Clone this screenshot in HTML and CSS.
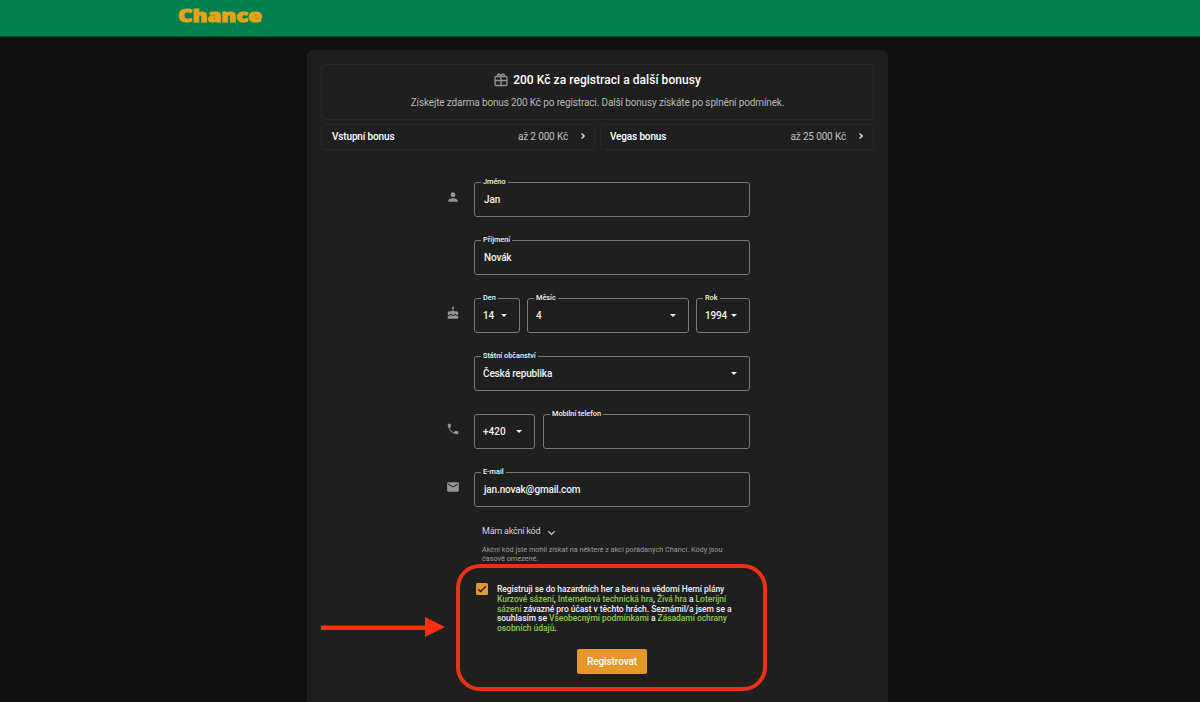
FILE: index.html
```html
<!DOCTYPE html>
<html lang="cs">
<head>
<meta charset="utf-8">
<title>Chance – registrace</title>
<link rel="stylesheet" href="styles.css">
</head>
<body>
<header class="topbar">
  <svg class="logo" width="88" height="24" viewBox="0 0 88 24" role="img" aria-label="Chance"><text class="logo-text" x="2" y="18" textLength="84" lengthAdjust="spacingAndGlyphs">Chance</text></svg>
</header>
<main class="card">
  <section class="promo">
    <h1 class="promo-title">
      <svg class="gift" width="14" height="14" viewBox="0 0 14 14"><rect x="1" y="3.500" width="12" height="9" rx="1"/><path d="M1 7.500h12M7 3.500v9M7 3.500C6.600 1.800 5.800 1 4.800 1 3.300 1 3.300 3.500 4.800 3.500M7 3.500C7.400 1.800 8.200 1 9.200 1c1.500 0 1.500 2.500 0 2.500"/></svg>
      <span>200 Kč za registraci a další bonusy</span>
    </h1>
    <p class="promo-sub"><span>Získejte zdarma bonus 200 Kč po registraci. Další bonusy získáte po splnění podmínek.</span></p>
  </section>
  <section class="bonuses">
    <div class="bonus"><b>Vstupní bonus</b><span class="amount">až 2 000 Kč</span><svg class="chev" width="6" height="8" viewBox="0 0 6 8"><path d="M1.500 1.500 4.200 4 1.500 6.500"/></svg></div>
    <div class="bonus"><b>Vegas bonus</b><span class="amount">až 25 000 Kč</span><svg class="chev" width="6" height="8" viewBox="0 0 6 8"><path d="M1.500 1.500 4.200 4 1.500 6.500"/></svg></div>
  </section>
  <form class="form">
    <div class="row">
      <svg class="icon" viewBox="0 0 24 24"><path d="M12 12c2.210 0 4-1.790 4-4s-1.790-4-4-4-4 1.790-4 4 1.790 4 4 4zm0 2c-2.670 0-8 1.340-8 4v2h16v-2c0-2.660-5.330-4-8-4z"/></svg>
      <div class="field text"><span class="label">Jméno</span>Jan</div>
    </div>
    <div class="row">
      <i class="icon"></i>
      <div class="field text"><span class="label">Příjmení</span>Novák</div>
    </div>
    <div class="row">
      <svg class="icon" viewBox="0 0 24 24"><path d="M12 6c1.110 0 2-.9 2-2 0-.38-.1-.73-.29-1.030L12 0l-1.710 2.970c-.19.3-.29.65-.29 1.030 0 1.100.9 2 2 2zm4.600 9.990-1.070-1.070-1.080 1.070c-1.300 1.300-3.580 1.310-4.890 0l-1.070-1.070-1.090 1.070C6.750 16.640 5.880 17 4.960 17c-.73 0-1.400-.23-1.960-.61V21c0 .55.45 1 1 1h16c.55 0 1-.45 1-1v-4.610c-.56.38-1.230.61-1.960.61-.92 0-1.790-.36-2.440-1.010zM18 9h-5V7h-2v2H6c-1.660 0-3 1.340-3 3v1.540c0 1.080.88 1.960 1.960 1.960.52 0 1.020-.2 1.380-.57l2.140-2.130 2.130 2.130c.74.74 2.030.74 2.770 0l2.140-2.130 2.130 2.130c.37.37.86.57 1.380.57 1.080 0 1.960-.88 1.960-1.960V12C21 10.340 19.660 9 18 9z"/></svg>
      <div class="field day"><span class="label">Den</span>14<i class="caret"></i></div>
      <div class="field month"><span class="label">Měsíc</span>4<i class="caret"></i></div>
      <div class="field year"><span class="label">Rok</span>1994<i class="caret"></i></div>
    </div>
    <div class="row">
      <i class="icon"></i>
      <div class="field country"><span class="label">Státní občanství</span>Česká republika<i class="caret"></i></div>
    </div>
    <div class="row">
      <svg class="icon" viewBox="0 0 24 24"><path d="M16.500 15.500c-.5-.2-1-.1-1.400.3l-1.800 2.200C10.500 16.600 7.500 13.700 6 10.700L8.200 8.900c.3-.3.4-.8.3-1.200C8.200 6.600 8 5.300 8 4c0-.6-.4-1-1-1H4c-.6 0-1 .3-1 1C3 13.300 10.700 21 20 21c.7 0 1-.6 1-1.200v-3.200c0-.6-.4-1-1-1-1.200 0-2.400.2-3.500-.1z"/></svg>
      <div class="field prefix">+420<i class="caret"></i></div>
      <div class="field phone"><span class="label">Mobilní telefon</span></div>
    </div>
    <div class="row">
      <svg class="icon" viewBox="0 0 24 24"><path d="M20 4H4c-1.100 0-2 .9-2 2v12c0 1.100.9 2 2 2h16c1.100 0 2-.9 2-2V6c0-1.100-.9-2-2-2zm0 4-8 5-8-5V6l8 5 8-5v2z"/></svg>
      <div class="field text"><span class="label">E-mail</span>jan.novak@gmail.com</div>
    </div>
    <div class="code">
      <div class="code-title"><span>Mám akční kód</span><svg width="9" height="6" viewBox="0 0 9 6"><path d="M1.300 1.200 4.500 4.400 7.700 1.200"/></svg></div>
      <p class="code-note">Akční kód jste mohli získat na některé z akcí pořádaných Chancí. Kódy jsou<br>časově omezené.</p>
    </div>
    <div class="consent">
      <svg class="check" width="12" height="12" viewBox="0 0 12 12"><rect width="12" height="12" rx="1.500"/><path d="M2.200 6.200 4.600 8.600 9.900 3.200"/></svg>
      <p class="terms">Registruji se do hazardních her a beru na vědomí Herní plány<br><a>Kurzové sázení</a>, <a>Internetová technická hra</a>, <a>Živá hra</a> a <a>Loterijní</a><br><a>sázení</a> závazné pro účast v těchto hrách. Seznámil/a jsem se a<br>souhlasím se <a>Všeobecnými podmínkami</a> a <a>Zásadami ochrany</a><br><a>osobních údajů</a>.</p>
    </div>
    <button class="submit" type="button">Registrovat</button>
  </form>
</main>
<svg class="arrow" width="126" height="22" viewBox="0 0 126 22"><path d="M0 9.500h104V1l20 10-20 10v-7H0z"/></svg>
<div class="highlight"></div>
</body>
</html>
```
FILE: styles.css
```css
* { box-sizing: border-box; }
body {
  margin: 0;
  height: 702px;
  overflow: hidden;
  background: #111112;
  color: #f2f2f2;
  font-family: Roboto, "Liberation Sans", sans-serif;
  font-weight: 500;
  position: relative;
}
h1, p { margin: 0; }
.topbar {
  height: 37px;
  padding: 4px 0 0 176px;
  background: #02804f;
  border-bottom: 1px solid #04502f;
}
.logo { display: block; }
.logo-text {
  font: 800 18px "Open Sans", sans-serif;
  fill: #e2a518;
  stroke: #e2a518;
  stroke-width: 1px;
}
.card {
  width: 581px;
  height: 670px;
  margin: 13px 0 0 307px;
  padding: 14px 14px 0;
  border-radius: 6px;
  background: #1f1f1f;
}
.promo {
  height: 56px;
  border: 1px solid #282828;
  border-radius: 3px;
  text-align: center;
  padding-top: 6px;
}
.promo-title {
  display: flex;
  align-items: center;
  justify-content: center;
  gap: 5px;
  height: 17px;
  font-size: 12px;
  font-weight: 500;
  letter-spacing: .05px;
  color: #fff;
}
.gift { fill: none; stroke: #959595; stroke-width: 1.300; }
.promo-sub { margin-top: 8px; font-size: 10px; letter-spacing: -.14px; line-height: 14px; font-weight: 400; color: #b8b8b8; }
.bonuses { display: grid; grid-template-columns: 1fr 1fr; gap: 5px; margin-top: 4px; }
.bonus {
  display: flex;
  align-items: center;
  height: 26px;
  padding: 0 8px 2px 10px;
  border: 1px solid #282828;
  border-radius: 3px;
  font-size: 10px;
  letter-spacing: -.15px;
}
.bonus + .bonus { padding: 0 9px 2px; }
.bonus b { font-weight: 500; color: #fff; }
.amount { margin-left: auto; font-weight: 400; color: #c0c0c0; }
.chev { margin-left: 12px; fill: none; stroke: #eee; stroke-width: 1.200; }
.form { margin: 32px 0 0 124px; width: 305px; }
.row { display: flex; height: 35px; margin-bottom: 23px; gap: 7px; }
.icon { width: 14px; height: 14px; margin: 8px 7px 0 1px; fill: #959595; flex: none; }
.field {
  position: relative;
  display: flex;
  align-items: center;
  height: 35px;
  padding: 0 12px 0 8px;
  border: 1px solid #777;
  border-radius: 3px;
  font-size: 10px;
  letter-spacing: -.15px;
}
.text { flex: 1; padding-left: 9px; }
.label {
  position: absolute;
  left: 6px;
  top: -6px;
  padding: 0 2px;
  background: #1f1f1f;
  font-size: 7.300px;
  letter-spacing: 0;
  line-height: 10px;
  white-space: nowrap;
}
.caret {
  margin-left: auto;
  border: 3.500px solid transparent;
  border-top-color: #f2f2f2;
  border-bottom: 0;
}
.day { width: 46px; }
.month { width: 162px; }
.year { width: 54px; }
.country { flex: 1; }
.prefix { width: 61px; letter-spacing: 0; }
.phone { flex: 1; margin-left: 1px; }
.code { margin: -5px 0 0 37px; }
.code-title { display: flex; align-items: center; gap: 7px; height: 12px; font-size: 9px; letter-spacing: -.22px; font-weight: 400; color: #d2d2d2; }
.code-title svg { margin-top: 4px; fill: none; stroke: #ccc; stroke-width: 1.200; }
.code-note { margin-top: 8px; font-size: 7.300px; letter-spacing: -.02px; line-height: 9px; font-weight: 400; color: #9a9a9a; white-space: nowrap; }
.consent { display: flex; gap: 9px; margin: 20px 0 0 31px; }
.check { flex: none; fill: #e69728; }
.check path { fill: none; stroke: #222; stroke-width: 1.400; }
.terms { margin-top: 2px; font-size: 8.500px; letter-spacing: -.045px; line-height: 9.800px; white-space: nowrap; }
.terms a { color: #8bc94a; }
.submit {
  display: block;
  width: 70px;
  height: 25px;
  margin: 15px 0 0 132px;
  padding: 0;
  border: 0;
  border-radius: 2px;
  background: #e69728;
  color: #fff;
  font: 500 10px Roboto, sans-serif;
  letter-spacing: -.08px;
}
.arrow { position: absolute; left: 321px; top: 616px; fill: #ff2e0d; }
.highlight {
  position: absolute;
  left: 456px;
  top: 564px;
  width: 311px;
  height: 127px;
  border: 4px solid #e93213;
  border-radius: 24px;
}
```
